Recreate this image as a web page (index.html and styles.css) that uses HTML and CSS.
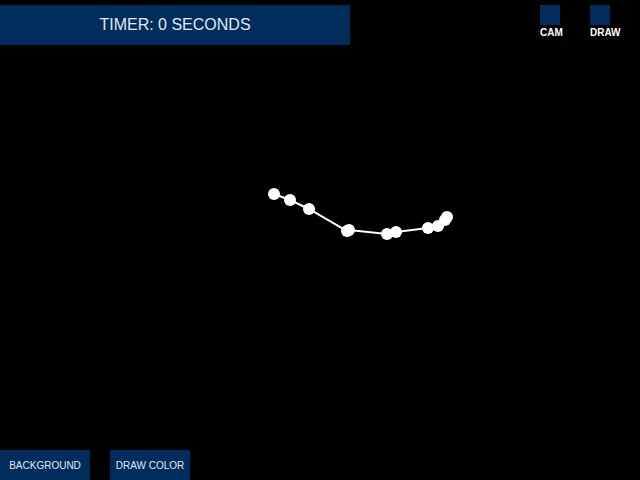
FILE: index.html
```html
<!DOCTYPE html>
<html lang="en">
<head>
    <meta charset="UTF-8">
    <meta name="viewport" content="width=device-width, initial-scale=1.0">
    <title>Timer Draw</title>
    <link rel="stylesheet" href="styles.css">
</head>
<body>

    <svg class="canvas" width="640" height="480" viewBox="0 0 640 480">
        <polyline class="stroke" points="274,194 290,200 309,209 347,231 349,230 387,234 396,232 428,228 438,226 445,220 447,217"></polyline>
        <g class="dots">
            <circle cx="274" cy="194" r="6"></circle>
            <circle cx="290" cy="200" r="6"></circle>
            <circle cx="309" cy="209" r="6"></circle>
            <circle cx="347" cy="231" r="6"></circle>
            <circle cx="349" cy="230" r="6"></circle>
            <circle cx="387" cy="234" r="6"></circle>
            <circle cx="396" cy="232" r="6"></circle>
            <circle cx="428" cy="228" r="6"></circle>
            <circle cx="438" cy="226" r="6"></circle>
            <circle cx="445" cy="220" r="6"></circle>
            <circle cx="447" cy="217" r="6"></circle>
        </g>
    </svg>

    <div class="top">
        <div class="timer">TIMER: 0 SECONDS</div>
        <div class="tools">
            <div class="tool">
                <div class="swatch"></div>
                <div class="tool-label">CAM</div>
            </div>
            <div class="tool">
                <div class="swatch"></div>
                <div class="tool-label">DRAW</div>
            </div>
        </div>
    </div>

    <div class="bottom">
        <button class="btn btn-bg">BACKGROUND</button>
        <button class="btn btn-color">DRAW COLOR</button>
    </div>

</body>
</html>
```

FILE: styles.css
```css
html, body {
    margin: 0;
    padding: 0;
}
body {
    font-family: "Liberation Sans", Arial, sans-serif;
    background: #000;
    width: 640px;
    height: 480px;
    overflow: hidden;
    position: relative;
    display: flex;
    flex-direction: column;
    justify-content: space-between;
}
.canvas {
    position: absolute;
    left: 0;
    top: 0;
    pointer-events: none;
}
.stroke {
    fill: none;
    stroke: #fff;
    stroke-width: 2;
}
.dots circle {
    fill: #fff;
}
.top {
    display: flex;
    padding-top: 5px;
    position: relative;
}
.timer {
    width: 350px;
    height: 40px;
    background: #002d5c;
    color: #e0e8f2;
    font-size: 16px;
    display: flex;
    align-items: center;
    justify-content: center;
}
.tools {
    display: flex;
    gap: 30px;
    margin-left: 190px;
}
.tool {
    width: 20px;
}
.swatch {
    width: 20px;
    height: 20px;
    background: #002d5c;
}
.tool-label {
    margin-top: 2px;
    color: #fff;
    font-size: 10px;
    font-weight: bold;
    line-height: 12px;
    white-space: nowrap;
}
.bottom {
    display: flex;
    gap: 20px;
    position: relative;
}
.btn {
    height: 30px;
    padding: 0;
    border: none;
    border-radius: 0;
    background: #002d5c;
    color: #e0e8f2;
    font-family: "Liberation Sans", Arial, sans-serif;
    font-size: 10px;
}
.btn-bg {
    width: 90px;
}
.btn-color {
    width: 80px;
}
```
